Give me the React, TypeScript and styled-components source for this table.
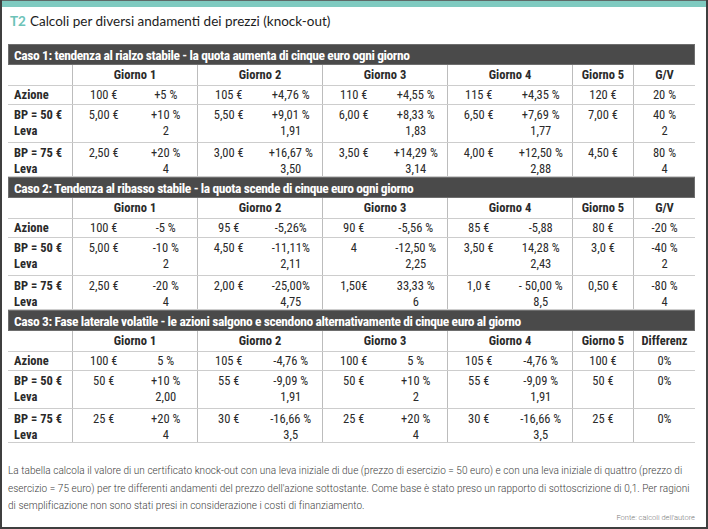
import React from "react";
import styled, { createGlobalStyle } from "styled-components";

const GlobalStyle = createGlobalStyle`
  html, body { margin: 0; padding: 0; background: #ffffff; }
  * { box-sizing: border-box; }
`;

const COND = `"Liberation Sans Narrow", "Roboto Condensed", "DejaVu Sans Condensed", "Liberation Sans", sans-serif`;
const COLS = "64px repeat(8, 62.5px) 61px 62px";

const Frame = styled.div`
  width: 708px;
  height: 529px;
  border-left: 2px solid #3f3f3f;
  border-right: 2px solid #3f3f3f;
  border-bottom: 2px solid #3f3f3f;
  display: flex;
  flex-direction: column;
  overflow: hidden;
`;

const TopBar = styled.div`
  height: 7px;
  background: #7fcac0;
  border-top: 1px solid #5e6a68;
  margin: 0 -2px;
`;

const Title = styled.h1`
  margin: 4px 0 0 8px;
  height: 20px;
  line-height: 20px;
  font-family: Lato, "Noto Sans", sans-serif;
  font-weight: 400;
  font-size: 13.5px;
  color: #1c1c1c;
`;

const Tag = styled.span`
  color: #6cc3b8;
  font-weight: 700;
  margin-right: 4px;
`;

const Table = styled.div`
  margin: 13px 0 0 6px;
  width: 687px;
  font-family: ${COND};
  color: #2a2a2a;
`;

const Section = styled.section`
  display: flex;
  flex-direction: column;
`;

const Bar = styled.div`
  height: 21px;
  line-height: 20px;
  background: #4a4a4a;
  border: 1px solid #6e6e6e;
  color: #ffffff;
  font-weight: 700;
  font-size: 13.5px;
  letter-spacing: -0.4px;
  padding-left: 5px;
  white-space: nowrap;
`;

const Row = styled.div<{ $h: number; $top?: boolean }>`
  display: grid;
  grid-template-columns: ${COLS};
  height: ${(p) => p.$h}px;
  border-bottom: 1px solid #cdcdcd;
  align-items: ${(p) => (p.$top ? "start" : "center")};
`;

const Cell = styled.div<{ $sep?: boolean; $span?: number; $label?: boolean; $head?: boolean; $top?: boolean }>`
  grid-column: span ${(p) => p.$span ?? 1};
  align-self: stretch;
  display: flex;
  flex-direction: column;
  justify-content: ${(p) => (p.$top ? "flex-start" : "center")};
  padding-top: ${(p) => (p.$top ? "2px" : "0")};
  align-items: ${(p) => (p.$label ? "flex-start" : "center")};
  padding-left: ${(p) => (p.$label ? "6px" : "0")};
  border-left: ${(p) => (p.$sep ? "1px solid #bcbcbc" : "none")};
  font-size: 12.5px;
  font-weight: ${(p) => (p.$label || p.$head ? 700 : 400)};
  line-height: 15.5px;
  white-space: nowrap;
`;

const Line = styled.span`
  display: block;
  white-space: nowrap;
`;

const Caption = styled.p`
  margin: 19px 10px 0 6px;
  font-family: Roboto, "Liberation Sans", sans-serif;
  font-weight: 300;
  font-size: 10px;
  line-height: 17.5px;
  letter-spacing: 0.05px;
  color: #404040;
`;

const Source = styled.div`
  margin: -2px 11px 0 0;
  text-align: right;
  font-family: Roboto, "Liberation Sans", sans-serif;
  font-weight: 300;
  font-size: 7.5px;
  line-height: 9px;
  color: #7a7a7a;
`;

type V = string | [string, string];

interface Caso {
  title: string;
  last: string;
  azione: V[];
  bp50: V[];
  bp75: V[];
}

const casi: Caso[] = [
  {
    title: "Caso 1: tendenza al rialzo stabile - la quota aumenta di cinque euro ogni giorno",
    last: "G/V",
    azione: ["100 €", "+5 %", "105 €", "+4,76 %", "110 €", "+4,55 %", "115 €", "+4,35 %", "120 €", "20 %"],
    bp50: ["5,00 €", ["+10 %", "2"], "5,50 €", ["+9,01 %", "1,91"], "6,00 €", ["+8,33 %", "1,83"], "6,50 €", ["+7,69 %", "1,77"], "7,00 €", ["40 %", "2"]],
    bp75: ["2,50 €", ["+20 %", "4"], "3,00 €", ["+16,67 %", "3,50"], "3,50 €", ["+14,29 %", "3,14"], "4,00 €", ["+12,50 %", "2,88"], "4,50 €", ["80 %", "4"]],
  },
  {
    title: "Caso 2: Tendenza al ribasso stabile - la quota scende di cinque euro ogni giorno",
    last: "G/V",
    azione: ["100 €", "-5 %", "95 €", "-5,26%", "90 €", "-5,56 %", "85 €", "-5,88", "80 €", "-20 %"],
    bp50: ["5,00 €", ["-10 %", "2"], "4,50 €", ["-11,11%", "2,11"], "4", ["-12,50 %", "2,25"], "3,50 €", ["14,28 %", "2,43"], "3,0 €", ["-40 %", "2"]],
    bp75: ["2,50 €", ["-20 %", "4"], "2,00 €", ["-25,00%", "4,75"], "1,50€", ["33,33 %", "6"], "1,0 €", ["- 50,00 %", "8,5"], "0,50 €", ["-80 %", "4"]],
  },
  {
    title: "Caso 3: Fase laterale volatile - le azioni salgono e scendono alternativamente di cinque euro al giorno",
    last: "Differenz",
    azione: ["100 €", "5 %", "105 €", "-4,76 %", "100 €", "5 %", "105 €", "-4,76 %", "100 €", "0%"],
    bp50: ["50 €", ["+10 %", "2,00"], "55 €", ["-9,09 %", "1,91"], "50 €", ["+10 %", "2"], "55 €", ["-9,09 %", "1,91"], "50 €", "0%"],
    bp75: ["25 €", ["+20 %", "4"], "30 €", ["-16,66 %", "3,5"], "25 €", ["+20 %", "4"], "30 €", ["-16,66 %", "3,5"], "25 €", "0%"],
  },
];

const sepAt = (i: number) => i % 2 === 0 || i === 9;

const ValueCells: React.FC<{ values: V[]; top?: boolean }> = ({ values, top }) => (
  <>
    {values.map((v, i) => (
      <Cell key={i} $sep={sepAt(i)} $top={top}>
        {Array.isArray(v) ? (
          <>
            <Line>{v[0]}</Line>
            <Line>{v[1]}</Line>
          </>
        ) : (
          <Line>{v}</Line>
        )}
      </Cell>
    ))}
  </>
);

const CasoTable: React.FC<{ c: Caso }> = ({ c }) => (
  <Section>
    <Bar>{c.title}</Bar>
    <Row $h={21}>
      <Cell $label />
      {[1, 2, 3, 4].map((n) => (
        <Cell key={n} $sep $span={2} $head>
          Giorno {n}
        </Cell>
      ))}
      <Cell $sep $head>Giorno 5</Cell>
      <Cell $sep $head>{c.last}</Cell>
    </Row>
    <Row $h={19}>
      <Cell $label>Azione</Cell>
      <ValueCells values={c.azione} />
    </Row>
    <Row $h={38} $top>
      <Cell $label $top>
        <Line>BP = 50 €</Line>
        <Line>Leva</Line>
      </Cell>
      <ValueCells values={c.bp50} top />
    </Row>
    <Row $h={34} $top>
      <Cell $label $top>
        <Line>BP = 75 €</Line>
        <Line>Leva</Line>
      </Cell>
      <ValueCells values={c.bp75} top />
    </Row>
  </Section>
);

const captionLines = [
  "La tabella calcola il valore di un certificato knock-out con una leva iniziale di due (prezzo di esercizio = 50 euro) e con una leva iniziale di quattro (prezzo di",
  "esercizio = 75 euro) per tre differenti andamenti del prezzo dell'azione sottostante. Come base è stato preso un rapporto di sottoscrizione di 0,1. Per ragioni",
  "di semplificazione non sono stati presi in considerazione i costi di finanziamento.",
];

export default function App() {
  return (
    <>
      <GlobalStyle />
      <Frame>
        <TopBar />
        <Title>
          <Tag>T2</Tag>Calcoli per diversi andamenti dei prezzi (knock-out)
        </Title>
        <Table>
          {casi.map((c, i) => (
            <CasoTable key={i} c={c} />
          ))}
        </Table>
        <Caption>
          {captionLines.map((l, i) => (
            <Line key={i}>{l}</Line>
          ))}
        </Caption>
        <Source>Fonte: calcoli dell'autore</Source>
      </Frame>
    </>
  );
}
